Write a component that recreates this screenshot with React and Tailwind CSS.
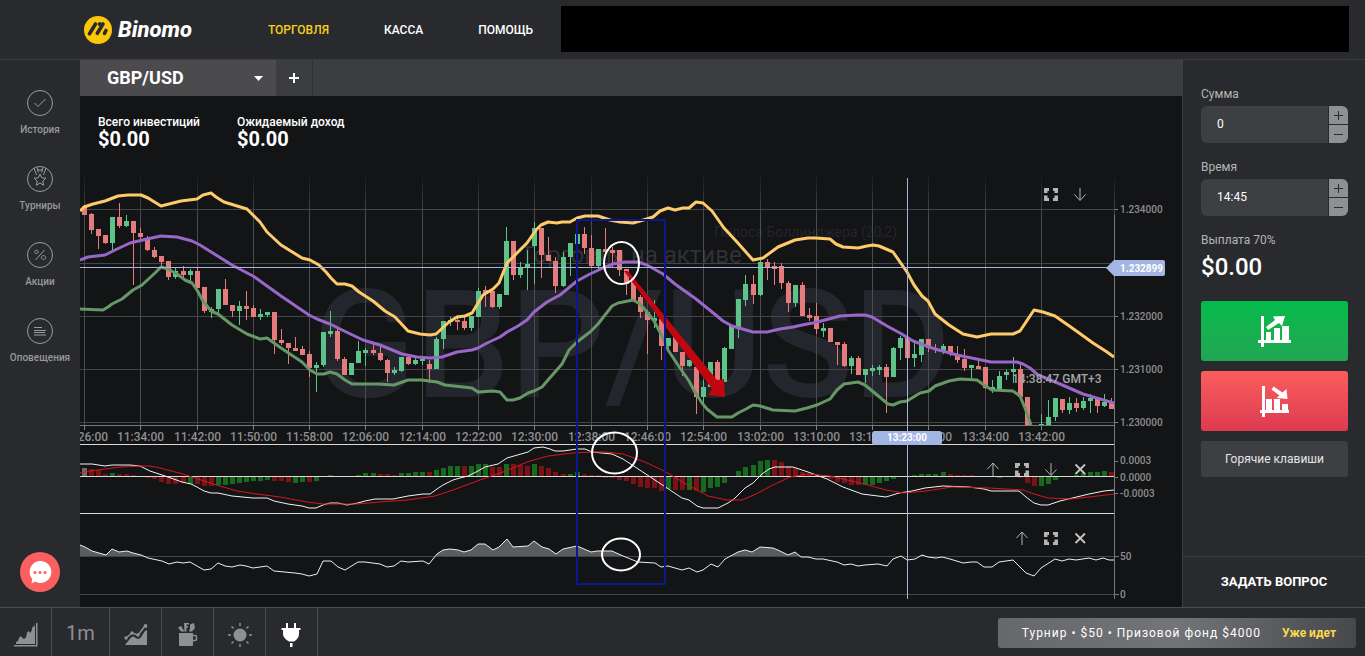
import { Fragment, useState } from "react"

const STEP = 7.037
const xAt = (i) => 84.5 + i * STEP

// top, bottom, high, low, 1 = up
const candles = [
    [207, 215, 205, 215, 0], [214, 230, 213, 234, 0], [229, 236, 229, 249, 0], [235, 243, 235, 244, 0],
    [217, 243, 217, 250, 1], [217, 226, 203, 228, 0], [221, 226, 215, 227, 1], [221, 233, 221, 285, 0],
    [233, 237, 228, 239, 0], [238, 250, 236, 251, 0], [250, 257, 247, 258, 0], [256, 262, 256, 266, 0],
    [261, 277, 261, 280, 0], [271, 277, 268, 279, 1], [271, 275, 266, 277, 0], [271, 275, 269, 281, 1],
    [271, 288, 268, 288, 0], [287, 311, 287, 313, 0], [309, 312, 307, 318, 1], [289, 309, 289, 313, 1],
    [289, 305, 279, 305, 0], [305, 311, 305, 317, 0], [306, 311, 301, 325, 1], [306, 309, 291, 320, 0],
    [308, 317, 305, 317, 0], [314, 317, 309, 320, 1], [312, 315, 312, 317, 1], [312, 340, 312, 354, 0],
    [340, 343, 329, 345, 0], [343, 348, 343, 364, 0], [348, 351, 337, 351, 0], [349, 355, 346, 355, 0],
    [354, 368, 351, 377, 0], [365, 368, 362, 392, 1], [332, 365, 332, 367, 1], [331, 334, 311, 337, 1],
    [331, 359, 329, 361, 0], [359, 375, 357, 375, 0], [363, 375, 363, 375, 1], [351, 363, 341, 363, 1],
    [350, 353, 348, 366, 1], [350, 353, 343, 355, 0], [353, 360, 344, 361, 0], [360, 373, 359, 382, 0],
    [370, 373, 367, 375, 1], [357, 371, 357, 372, 1], [357, 364, 357, 365, 0], [360, 364, 358, 365, 1],
    [359, 361, 357, 365, 1], [364, 369, 360, 383, 0], [339, 369, 337, 369, 1], [321, 339, 321, 349, 1],
    [320, 322, 317, 326, 1], [320, 322, 315, 330, 0], [321, 328, 317, 330, 0], [316, 328, 316, 331, 1],
    [291, 317, 288, 317, 1], [290, 294, 286, 307, 0], [291, 307, 291, 308, 0], [294, 307, 294, 309, 1],
    [241, 295, 227, 295, 1], [241, 275, 241, 280, 0], [268, 275, 262, 278, 1], [264, 268, 250, 290, 1],
    [228, 246, 222, 284, 1], [228, 255, 228, 278, 0], [255, 261, 237, 261, 0], [261, 286, 257, 293, 0],
    [257, 286, 252, 287, 1], [243, 257, 243, 276, 1], [234, 244, 234, 244, 1], [234, 248, 227, 254, 0],
    [248, 266, 235, 267, 0], [249, 266, 249, 269, 1], [249, 252, 228, 254, 0], [250, 253, 247, 267, 0],
    [250, 270, 250, 276, 0], [269, 284, 269, 295, 0], [281, 300, 281, 300, 0], [297, 312, 295, 318, 0],
    [312, 320, 310, 354, 0], [318, 321, 300, 328, 1], [319, 346, 319, 360, 0], [338, 346, 338, 350, 1],
    [336, 352, 336, 352, 0], [352, 366, 352, 376, 0], [360, 366, 360, 367, 1], [367, 397, 366, 414, 0],
    [387, 397, 380, 407, 1], [362, 387, 362, 387, 1], [362, 382, 360, 382, 0], [348, 382, 347, 382, 1],
    [326, 349, 326, 349, 1], [299, 327, 299, 338, 1], [284, 300, 275, 306, 1], [284, 295, 275, 304, 0],
    [262, 295, 258, 296, 1], [262, 267, 259, 280, 0], [266, 269, 262, 285, 0], [266, 283, 263, 289, 0],
    [283, 303, 281, 312, 0], [285, 303, 285, 307, 1], [285, 316, 282, 316, 0], [315, 318, 308, 321, 0],
    [316, 329, 303, 334, 0], [328, 331, 323, 337, 1], [328, 342, 328, 342, 0], [342, 345, 342, 365, 0],
    [344, 366, 342, 367, 0], [358, 366, 356, 374, 1], [358, 375, 356, 375, 0], [369, 375, 369, 383, 1],
    [368, 371, 365, 376, 1], [367, 370, 365, 375, 1], [367, 377, 364, 413, 0], [348, 377, 347, 377, 1],
    [338, 348, 336, 360, 1], [337, 358, 337, 358, 0], [354, 358, 341, 367, 1], [339, 355, 339, 362, 1],
    [339, 348, 339, 352, 0], [348, 350, 344, 353, 0], [346, 351, 344, 354, 1], [346, 353, 346, 356, 0],
    [354, 360, 346, 363, 0], [359, 368, 349, 371, 0], [365, 368, 365, 379, 1], [366, 369, 361, 369, 0],
    [367, 388, 367, 389, 0], [387, 389, 380, 393, 1], [376, 389, 371, 389, 1], [372, 375, 370, 380, 1],
    [369, 372, 357, 383, 1], [369, 397, 364, 400, 0], [397, 425, 397, 425, 0], null,
    [424, 425, 414, 425, 1], [417, 425, 400, 425, 1], [398, 417, 398, 421, 1], [399, 410, 399, 413, 0],
    [403, 410, 397, 414, 1], [403, 408, 398, 412, 0], [401, 408, 397, 410, 1], [398, 401, 394, 413, 1],
    [399, 406, 397, 413, 0], [402, 406, 394, 407, 1], [402, 409, 398, 409, 0],
]

const upperBand = "80,211 84,207 93,204 105,201 118,196 128,195 141,195 148,198 161,206 181,201 197,199 203,195 211,193 216,197 224,202 247,209 260,222 267,232 281,245 302,258 310,260 319,265 326,272 331,278 337,284 345,284 352,286 359,292 373,301 385,311 395,317 408,331 420,334 430,335 436,334 449,322 457,317 465,316 472,313 483,295 493,289 499,283 507,263 527,243 536,230 541,225 548,222 557,223 562,222 570,222 577,218 585,216 598,216 610,220 620,222 633,223 640,221 653,217 660,211 668,208 675,210 683,208 689,208 696,202 703,203 712,211 724,228 737,242 753,260 763,258 778,247 795,240 808,238 815,238 830,239 836,244 843,247 858,248 867,246 873,245 879,246 893,252 907,272 914,285 922,296 928,301 935,314 949,325 963,334 977,337 991,334 1013,334 1020,331 1034,310 1043,312 1055,316 1075,330 1093,343 1107,352 1114,357"
const middleBand = "80,260 88,257 105,255 115,250 130,243 147,239 161,236 177,237 192,241 200,245 232,265 253,276 281,296 309,315 317,319 330,324 340,329 363,340 380,345 402,354 417,357 430,358 442,357 457,352 472,350 478,348 487,343 500,337 507,332 518,326 527,320 534,312 547,302 560,295 577,281 590,274 603,268 613,264 625,262 638,262 647,265 663,274 675,284 696,299 717,316 723,321 732,326 753,332 767,332 780,329 793,327 807,324 813,323 825,320 840,316 857,315 865,315 872,317 887,326 900,333 913,341 935,349 957,355 991,362 1017,362 1023,364 1030,368 1038,375 1060,384 1083,394 1114,403"
const lowerBand = "80,309 103,310 108,307 112,304 122,299 133,290 142,285 155,273 161,267 168,269 177,274 185,280 192,283 197,290 203,301 211,311 218,314 232,325 247,334 260,339 267,338 281,348 302,362 310,370 317,374 324,374 330,372 337,374 345,380 352,384 378,384 394,385 408,380 422,380 437,382 445,385 463,387 472,388 478,392 493,391 500,392 507,400 513,400 520,398 528,393 534,391 542,387 548,380 562,364 569,350 577,342 590,332 598,324 612,306 618,303 633,300 640,304 647,312 654,321 661,334 668,350 680,368 689,381 695,392 702,403 707,409 717,417 732,417 738,413 746,409 753,405 760,406 773,410 795,411 807,408 817,405 830,399 837,390 844,384 858,382 865,385 888,404 893,405 900,402 907,401 920,393 929,391 935,386 949,381 960,379 977,380 984,385 992,390 1013,391 1020,396 1025,408 1031,425"

const macdLine = "80,464 92,464 105,466 112,465 130,465 140,466 150,471 168,477 182,482 191,484 197,487 204,491 211,493 218,493 232,496 253,498 267,498 274,501 288,504 302,506 309,508 316,508 323,505 330,503 338,503 347,505 358,503 365,501 375,499 393,499 408,496 423,494 430,494 437,489 443,485 453,480 460,478 468,476 478,471 485,467 498,464 507,458 528,452 534,448 543,447 550,449 555,451 563,451 577,449 585,449 592,452 612,454 623,459 664,486 682,498 689,500 697,506 703,508 718,508 728,503 734,499 745,488 753,483 762,474 769,469 775,467 793,467 808,472 827,479 843,487 862,494 886,497 899,493 912,491 925,488 943,486 969,487 984,489 991,491 1008,491 1019,491 1026,497 1034,503 1041,505 1048,505 1060,501 1089,494 1104,491 1114,490"
const signalLine = "80,473 90,471 105,469 120,467 140,466 150,466 160,468 183,474 213,484 237,491 257,494 280,497 307,502 323,504 357,504 380,502 407,500 435,496 453,490 477,481 503,472 527,462 548,456 573,453 593,452 606,452 623,454 645,462 666,472 686,484 708,496 727,500 742,500 756,494 771,486 790,477 808,474 830,476 864,484 886,490 904,493 926,491 952,487 989,488 1023,490 1034,494 1048,498 1071,499 1089,497 1114,494"
const rsiLine = "80,545 85,547 92,551 106,555 112,549 119,552 127,551 133,553 141,555 148,558 162,561 169,564 177,562 183,563 190,562 197,566 204,570 211,569 218,563 225,566 232,567 240,565 246,566 253,568 267,566 274,571 295,573 302,574 309,576 317,574 323,561 331,561 338,567 345,570 358,562 365,562 380,564 387,567 394,566 401,561 408,562 423,561 429,564 437,554 443,550 450,549 458,550 464,552 471,550 478,544 485,544 493,550 499,547 507,539 513,547 528,546 534,541 542,547 549,549 556,554 563,549 577,546 591,552 597,551 612,551 623,556 638,562 655,563 661,567 668,566 682,570 689,568 697,572 703,570 711,564 718,567 725,559 738,552 745,550 752,552 760,547 773,548 780,551 788,555 795,552 801,557 808,557 816,559 823,559 837,562 844,565 851,564 858,566 865,565 878,564 887,566 893,559 901,556 907,560 915,559 922,555 928,557 936,558 942,557 950,559 963,563 971,562 977,562 984,567 992,567 999,562 1006,561 1013,560 1026,573 1034,576 1041,568 1055,559 1062,561 1069,559 1076,560 1089,558 1096,560 1103,558 1109,560 1114,560"

// histogram: height, colour key
const histogram = "8n 7r 6r 2r 3g 2r 2r 1r 0r -1r -2r -5r -7r -7r -6r -7g -7r -9r -9r -8g -8g -7g -6g -5g -4g -4g -3g -4r -4r -5r -6g -5g -5r -4g 0g 1g 0g 0g 0g 1g 3g 3g 2r 2r 1r 3g 3g 4g 4g 4r 6g 8g 10g 10g 10r 10g 12g 12g 9r 9r 12g 12r 11r 10r 12g 10r 8r 4r 2r 2g 4g 2r 1r 1r -1r -1r -3r -4r -7r -10r -11r -11r -14r -12g -13r -13r -13g -14r -15g -11g -10g -6g 0g 5g 9g 11g 15g 16g 16r 14r 10r 8r 4r 2r 1r 0r -2r -5r -6r -8r -8r -8g -8g -6g -4g -2g 0g 0g 1g 2g 2g 2g 4g 2r 1r 1r 1r 0r 0r 0r -1g 0r 0r -1r -6r -9r -9g -7g -3g 0g 0g 1g 3g 4g 4g 5g 4r"
    .split(" ")
    .map((s) => [parseInt(s), s.slice(-1)])
const barColors = { r: "#7d1215", g: "#17691c", n: "#6b6b6b" }

const times = ["11:26:00", "11:34:00", "11:42:00", "11:50:00", "11:58:00", "12:06:00", "12:14:00", "12:22:00", "12:30:00", "12:38:00", "12:46:00", "12:54:00", "13:02:00", "13:10:00", "13:18:00", "13:26:00", "13:34:00", "13:42:00"]
const gridX = (n) => Math.floor(xAt(n * 8)) + 0.5
const prices = [["1.234000", 209], ["", 263], ["1.232000", 316], ["1.231000", 369], ["1.230000", 422]]

const Chart = () => (
    <svg viewBox="80 168 1102 439" className="block h-auto w-full" fontFamily="Roboto, sans-serif" fontWeight="500" fontSize="10">
        <defs>
            <linearGradient id="fade" gradientUnits="userSpaceOnUse" x1="0" y1="172" x2="0" y2="215">
                <stop offset="0" stopColor="#4b4c4e" stopOpacity="0" />
                <stop offset="1" stopColor="#4b4c4e" />
            </linearGradient>
            <clipPath id="above50"><rect x="80" y="530" width="1034" height="26" /></clipPath>
            <clipPath id="plot"><rect x="80" y="168" width="1034" height="439" /></clipPath>
        </defs>

        {/* Watermark */}
        <text x="632" y="397" textAnchor="middle" fontSize="150" fill="#24262d">GBP/USD</text>
        <text x="631" y="263" textAnchor="middle" fontSize="24" fontWeight="400" fill="#303134">Торговля на активе</text>
        <text x="897" y="237" textAnchor="end" fontSize="14" fontWeight="400" fill="#242528">Полоса Боллинджера (20,2)</text>

        {/* Grid */}
        {times.map((t, n) => (
            <Fragment key={t}>
                <rect x={gridX(n) - 0.5} y="172" width="1" height="253" fill="url(#fade)" />
                <path d={`M${gridX(n)} 425v5`} stroke="#808183" />
                <text x={gridX(n)} y="441" textAnchor="middle" fontSize="12" fill="#8d8e90" clipPath="url(#plot)">{t}</text>
            </Fragment>
        ))}
        {prices.map(([label, y]) => (
            <Fragment key={y}>
                <path d={`M80 ${y}.5H1114`} stroke="#444547" />
                {label && <path d={`M1114 ${y}.5h4`} stroke="#808183" />}
                {label && <text x="1120" y={y + 4} fill="#8d8e90">{label}</text>}
            </Fragment>
        ))}
        <path d="M80 425.5H1114M1114.5 215V599" stroke="#77787a" fill="none" />
        <rect x="1114" y="178" width="1" height="37" fill="url(#fade)" />
        <path d="M1115 461.5h3M1115 477.5h3M1115 493.5h3M1115 556.5h4M1115 594.5h4" stroke="#77787a" />
        <g fill="#8d8e90">
            <text x="1120" y="464">0.0003</text>
            <text x="1120" y="481">0.0000</text>
            <text x="1120" y="497">-0.0003</text>
            <text x="1120" y="560">50</text>
            <text x="1120" y="598">0</text>
        </g>

        {/* Candles and bands */}
        <g clipPath="url(#plot)">
            {candles.map((c, i) => {
                if (!c) return null
                const [top, bottom, high, low, up] = c
                const x = Math.floor(xAt(i))
                return (
                    <g key={i} fill={up ? "#5dc389" : "#e47c7e"}>
                        <rect x={x} y={high} width="1" height={Math.max(low - high, 1)} />
                        <rect x={x - 2} y={top} width="5" height={bottom - top} />
                    </g>
                )
            })}
            <g fill="none" strokeWidth="3" strokeLinejoin="round">
                <polyline points={lowerBand} stroke="#669767" />
                <polyline points={middleBand} stroke="#9967c7" />
                <polyline points={upperBand} stroke="#fdcb6a" />
            </g>
        </g>
        <text x="1012" y="383" fontSize="12" fill="#a5a5a7">14:38:47 GMT+3</text>

        {/* MACD */}
        {histogram.map(([h, key], i) => (
            <rect key={i} x={Math.floor(xAt(i)) - 2} y={h > 0 ? 476 - h : 477} width="5" height={Math.abs(h)} fill={barColors[key]} />
        ))}
        <path d="M80 444.5H1114M80 476.5H1114M80 513.5H1114" stroke="#d9d9d9" />
        <polyline points={macdLine} fill="none" stroke="#f2f2f2" />
        <polyline points={signalLine} fill="none" stroke="#d8161c" />

        {/* RSI */}
        <polygon points={`80,556 ${rsiLine} 1114,556`} fill="#5b5c5e" clipPath="url(#above50)" />
        <path d="M80 556.5H1114M80 594.5H1114" stroke="#444547" />
        <polyline points={rsiLine} fill="none" stroke="#eeeeee" />

        {/* Crosshair */}
        <path d="M80 267.5H1110M907.5 178V599" stroke="#a3b5e3" />
        <path d="M1106 268l8-8h49a2 2 0 0 1 2 2v12a2 2 0 0 1-2 2h-49z" fill="#a3b5e3" />
        <text x="1120" y="272" fontWeight="700" fill="#ffffff">1.232899</text>
        <rect x="872" y="431" width="70" height="14" rx="3" fill="#a3b5e3" />
        <text x="907" y="441" textAnchor="middle" fontWeight="700" fill="#ffffff">13:23:00</text>

        {/* Annotations */}
        <path d="M624 271L628 271L717 380L724 379L725 397L708 395L712 389Z" fill="#c00710" />
        <g fill="none" strokeWidth="2">
            <rect x="577" y="220" width="88" height="364" stroke="#0b1690" />
            <g stroke="#ffffff">
                <ellipse cx="621.5" cy="263" rx="17.5" ry="21" />
                <ellipse cx="614.5" cy="453" rx="22.5" ry="20.5" />
                <ellipse cx="621" cy="554.5" rx="19" ry="16" />
            </g>
        </g>
    </svg>
)

const toolPaths = {
    up: <path d="M8 15V2M2.5 8L8 2l5.5 6" stroke="#b4b4b5" fill="none" />,
    down: <path d="M8 2v12M2.5 8.5L8 14.5l5.5-6" stroke="#b4b4b5" fill="none" />,
    expand: <path d="M1 7V2h5v3l-1.500 0v2zM15 7V2h-5v3l1.500 0v2zM1 9.500V15h5v-3l-1.500 0v-2.500zM15 9.500V15h-5v-3l1.500 0v-2.500z" fill="#b4b4b5" />,
    close: <path d="M3.5 3.500l9.500 9.500M13 3.500l-9.500 9.500" stroke="#c6c6c6" strokeWidth="1.8" fill="none" />,
}
const toolNames = { up: "Вверх", down: "Вниз", expand: "Развернуть", close: "Закрыть" }

const PanelTools = ({ tools, className }) => (
    <div className={`absolute right-[94px] flex gap-[13px] ${className}`}>
        {tools.map((t) => (
            <button key={t} type="button" aria-label={toolNames[t]}>
                <svg className="h-4 w-4" viewBox="0 0 16 16">{toolPaths[t]}</svg>
            </button>
        ))}
    </div>
)

const sideItems = [
    { label: "История", icon: <path d="M8.5 14l3.5 3.500 7.500-7.500" /> },
    { label: "Турниры", icon: <path d="M8 3l2.500 7M11 2.500l1.500 5M20 3l-2.500 7M17 2.500l-1.500 5M11 5h6M14 9l1.700 3.800 4.200.4-3.200 2.800 1 4.200-3.700-2.200-3.700 2.200 1-4.200-3.200-2.800 4.200-.4z" /> },
    { label: "Акции", icon: <path d="M18.5 9l-9 10M10.500 9.200a1.700 1.700 0 1 0 .01 0M17.500 14.500a2 2 0 1 0 .01 0" /> },
    { label: "Оповещения", icon: <path d="M8 10.500h8M8 13.500h12M8 15.500h11M8 18h12" /> },
]

const Sidebar = () => (
    <aside className="flex w-20 shrink-0 flex-col items-center justify-between pt-7 pb-[15px]">
        <nav className="flex flex-col gap-7">
            {sideItems.map(({ label, icon }) => (
                <a key={label} href="#" className="flex h-12 flex-col items-center justify-between text-[10px] leading-3 font-medium text-[#98999b]">
                    <svg className="h-[30px] w-[30px]" viewBox="-1 -1 30 30" fill="none" stroke="#9b9c9e">
                        <circle cx="14" cy="14" r="12.500" />
                        {icon}
                    </svg>
                    {label}
                </a>
            ))}
        </nav>
        <button type="button" aria-label="Чат" className="flex h-10 w-10 items-center justify-center rounded-full bg-[#fc5f5f]">
            <svg className="h-6 w-6" viewBox="0 0 24 24">
                <path d="M12 1a11 11 0 1 1-5 20.600L3.500 23.500 4.200 19A11 11 0 0 1 12 1z" fill="#fff" />
                <g fill="#fc5f5f"><circle cx="7" cy="12.500" r="1.500" /><circle cx="12" cy="12.500" r="1.500" /><circle cx="17" cy="12.500" r="1.500" /></g>
            </svg>
        </button>
    </aside>
)

const Header = () => (
    <header className="flex h-15 items-center border-b border-[#3d3e41] pr-4 pl-[84px]">
        <a href="#" className="flex items-center gap-1.5">
            <svg className="h-7 w-7" viewBox="0 0 28 28">
                <circle cx="14" cy="14" r="14" fill="#fbc709" />
                <g stroke="#2a2b2e" strokeWidth="3.6" strokeLinecap="round">
                    <path d="M5.500 17.800L11.500 8M13.300 17.300L19 8M20.500 17.300L22 14.500M15.800 7.800L15.500 8.300" />
                </g>
            </svg>
            <span className="text-[22px] leading-7 font-extrabold text-white italic">Binomo</span>
        </a>
        <nav className="ml-[76px] flex gap-[55px] text-xs font-medium text-white">
            <a href="#" className="text-[#f4cf20]">ТОРГОВЛЯ</a>
            <a href="#">КАССА</a>
            <a href="#">ПОМОЩЬ</a>
        </nav>
        <div className="mb-px ml-7 h-[46px] flex-1 bg-black" />
    </header>
)

const Stepper = ({ id, label, value, onChange }) => (
    <div className="flex flex-col">
        <label htmlFor={id} className="text-xs leading-4 text-[#b5b5b6]">{label}</label>
        <div className="mt-1 flex h-[37px] overflow-hidden rounded-md">
            <input id={id} value={value} onChange={(e) => onChange(e.target.value)} className="min-w-0 flex-1 bg-[#3e3f42] pb-0.5 pl-4 text-xs text-white outline-none" />
            <div className="ml-px flex w-[19px] flex-col gap-px">
                <button type="button" aria-label={`${label} +`} className="flex flex-1 items-center justify-center bg-[#8f9092]">
                    <svg className="h-[9px] w-[9px]" viewBox="0 0 9 9" stroke="#2a2b2e"><path d="M0 4.500h9M4.500 0v9" /></svg>
                </button>
                <button type="button" aria-label={`${label} -`} className="flex flex-1 items-center justify-center bg-[#8f9092]">
                    <svg className="h-[9px] w-[9px]" viewBox="0 0 9 9" stroke="#2a2b2e"><path d="M0 4.500h9" /></svg>
                </button>
            </div>
        </div>
    </div>
)

const OrderPanel = () => {
    const [sum, setSum] = useState("0")
    const [time, setTime] = useState("14:45")

    return (
        <aside className="flex w-[183px] shrink-0 flex-col justify-between border-l border-[#3d3e41]">
            <div className="flex flex-col gap-4 pt-[26px] pr-[17px] pl-[18px]">
                <Stepper id="sum" label="Сумма" value={sum} onChange={setSum} />
                <Stepper id="time" label="Время" value={time} onChange={setTime} />
                <div>
                    <p className="text-xs leading-4 text-[#b5b5b6]">Выплата 70%</p>
                    <p className="mt-[3px] text-2xl leading-8 font-medium text-white">$0.00</p>
                </div>
                <div className="mt-0.5 flex flex-col gap-2.5">
                    <button type="button" aria-label="Вверх" className="flex h-15 items-center justify-center rounded-[3px] bg-linear-to-b from-[#02bb4c] to-[#20a652]">
                        <svg className="h-8 w-[34px]" viewBox="0 0 34 32" fill="#fff">
                            <path d="M3 1h3v24h27v3H6v4H3v-4H0v-3h3zM8 17h5v8H8zM16 13h6v12h-6zM24 11h7v14h-7zM8 12l9-7-2-3.500L27 1l-3 10-3-3-11 7z" />
                        </svg>
                    </button>
                    <button type="button" aria-label="Вниз" className="flex h-15 items-center justify-center rounded-[3px] bg-linear-to-b from-[#fb5d5e] to-[#dd3a50]">
                        <svg className="h-8 w-[34px]" viewBox="0 0 34 32" fill="#fff">
                            <path d="M4 1h3v24h24v3H7v4H4v-4H2v-3h2zM8 14h6v11H8zM16 14h6v11h-6zM24 19h6v6h-6zM15.500 1.500l9 6 4-3.500 1 10-11-1 3-2.500-8-6z" />
                        </svg>
                    </button>
                    <button type="button" className="h-9 rounded-[3px] bg-[#3e3f42] text-xs text-[#e6e6e6]">Горячие клавиши</button>
                </div>
            </div>
            <button type="button" className="h-[51px] border-t border-[#3d3e41] text-[13px] font-bold text-white">ЗАДАТЬ ВОПРОС</button>
        </aside>
    )
}

const Footer = () => (
    <footer className="flex items-stretch justify-between border-t border-[#4b4c4e] pr-[9px]">
        <div className="flex h-12 divide-x divide-[#4b4c4e] border-r border-[#4b4c4e] text-[#8f9092]">
            <button type="button" aria-label="Тип графика" className="flex w-[52px] items-center justify-center pt-1.5">
                <svg className="h-6 w-6" viewBox="0 0 24 24" fill="currentColor">
                    <path d="M2 21v-2l2-1 1-3 1.500-2 2 2 1.500 1 2-1.500 1-5 1.500-1.500 1.500 2 1.500-2 1-4 1-1 .5 1.500 1-4V21zM22 0h1.500v23.500H0V22h22z" />
                </svg>
            </button>
            <button type="button" className="w-[58px] pt-0.5 text-xl">1m</button>
            <button type="button" aria-label="Индикаторы" className="flex w-[52px] items-center justify-center pt-1.5">
                <svg className="h-6 w-6" viewBox="0 0 24 24" fill="currentColor">
                    <path d="M2 15l6-5 6 2 7-9" fill="none" stroke="currentColor" strokeWidth="1.500" />
                    <circle cx="2" cy="15" r="1.700" /><circle cx="8" cy="10" r="1.700" /><circle cx="14" cy="12" r="1.700" /><circle cx="21.500" cy="3" r="1.900" />
                    <path d="M1 22l6-7.500 2.500-1 4 2.500 3-1 4.500-7 2-1v15z" />
                </svg>
            </button>
            <button type="button" aria-label="Инструменты" className="flex w-[52px] items-center justify-center pt-1.5">
                <svg className="h-6 w-6" viewBox="0 0 24 24" fill="currentColor">
                    <path d="M3 10h14v12a1 1 0 0 1-1 1H4a1 1 0 0 1-1-1zM2 4.500L5 3l3.500 5.500H5zM8 0h5v1.500h-2.500V3H12v1.500h-1.500v4H8.500zM14 1.500L18 0l1 5-3 3.500h-3l1-3.500z" />
                    <path d="M17 12.500h2a1.500 1.500 0 0 1 1.500 1.500v2a1.500 1.500 0 0 1-1.500 1.500h-2" fill="none" stroke="currentColor" strokeWidth="1.500" />
                </svg>
            </button>
            <button type="button" aria-label="Тема" className="flex w-[52px] items-center justify-center pt-1.5">
                <svg className="h-6 w-6" viewBox="0 0 24 24" fill="currentColor">
                    <circle cx="12" cy="12" r="6.500" />
                    <path d="M12 0v3M12 21v3M0 12h3M21 12h3M3.500 3.500l2 2M18.500 18.500l2 2M3.500 20.500l2-2M18.500 5.500l2-2" stroke="currentColor" strokeWidth="1.500" />
                </svg>
            </button>
            <button type="button" aria-label="Подключение" className="flex w-[51px] items-center justify-center pt-1.5 text-white">
                <svg className="h-6 w-6" viewBox="0 0 24 24" fill="currentColor">
                    <path d="M6 0h2v5h6V0h2v5h4.500v2H19v4c0 3-2 6-5 7.500H9C6 17 3 14 3 11V7H1.500V5H6zM10 20h2.500v4H10z" />
                </svg>
            </button>
        </div>
        <a href="#" className="mt-0.5 flex h-[30px] items-center gap-[21px] self-center rounded-[3px] bg-linear-to-r from-[#67686b] via-[#737477] to-[#47484b] pr-5 pl-6 text-xs">
            <span className="tracking-[1px] text-white">Турнир • $50 • Призовой фонд $4000</span>
            <span className="font-bold text-[#f9da4e]">Уже идет</span>
        </a>
    </footer>
)

export default function App() {
    return (
        <div className="flex min-h-screen flex-col bg-[#292a2d] font-['Roboto',sans-serif]">
            <Header />
            <div className="flex flex-1">
                <Sidebar />
                <main className="min-w-0 flex-1 bg-[#131416]">
                    <div className="flex h-9 bg-[#3c3d40] text-white">
                        <div className="relative">
                            <select aria-label="Актив" className="h-9 w-[196px] appearance-none bg-[#4b4b4e] pl-[27px] text-lg font-bold outline-none">
                                <option>GBP/USD</option>
                            </select>
                            <svg className="pointer-events-none absolute top-4 right-[13px] h-[5px] w-[9px]" viewBox="0 0 9 5"><path d="M0 0h9L4.500 5z" fill="#fff" /></svg>
                        </div>
                        <button type="button" aria-label="Добавить актив" className="flex w-[37px] items-center justify-center border-r border-[#303134]">
                            <svg className="h-2.5 w-2.5" viewBox="0 0 10 10" stroke="#fff" strokeWidth="2"><path d="M0 5h10M5 0v10" /></svg>
                        </button>
                    </div>
                    <div className="flex h-[72px] gap-[37px] pt-[18px] pl-[18px] text-white">
                        <div>
                            <p className="text-xs leading-4 font-medium">Всего инвестиций</p>
                            <p className="text-xl leading-[18px] font-bold">$0.00</p>
                        </div>
                        <div>
                            <p className="text-xs leading-4 font-medium">Ожидаемый доход</p>
                            <p className="text-xl leading-[18px] font-bold">$0.00</p>
                        </div>
                    </div>
                    <div className="relative">
                        <Chart />
                        <PanelTools tools={["expand", "down"]} className="top-[18px]" />
                        <PanelTools tools={["up", "expand", "down", "close"]} className="top-[293px]" />
                        <PanelTools tools={["up", "expand", "close"]} className="top-[362px]" />
                    </div>
                </main>
                <OrderPanel />
            </div>
            <Footer />
        </div>
    )
}
